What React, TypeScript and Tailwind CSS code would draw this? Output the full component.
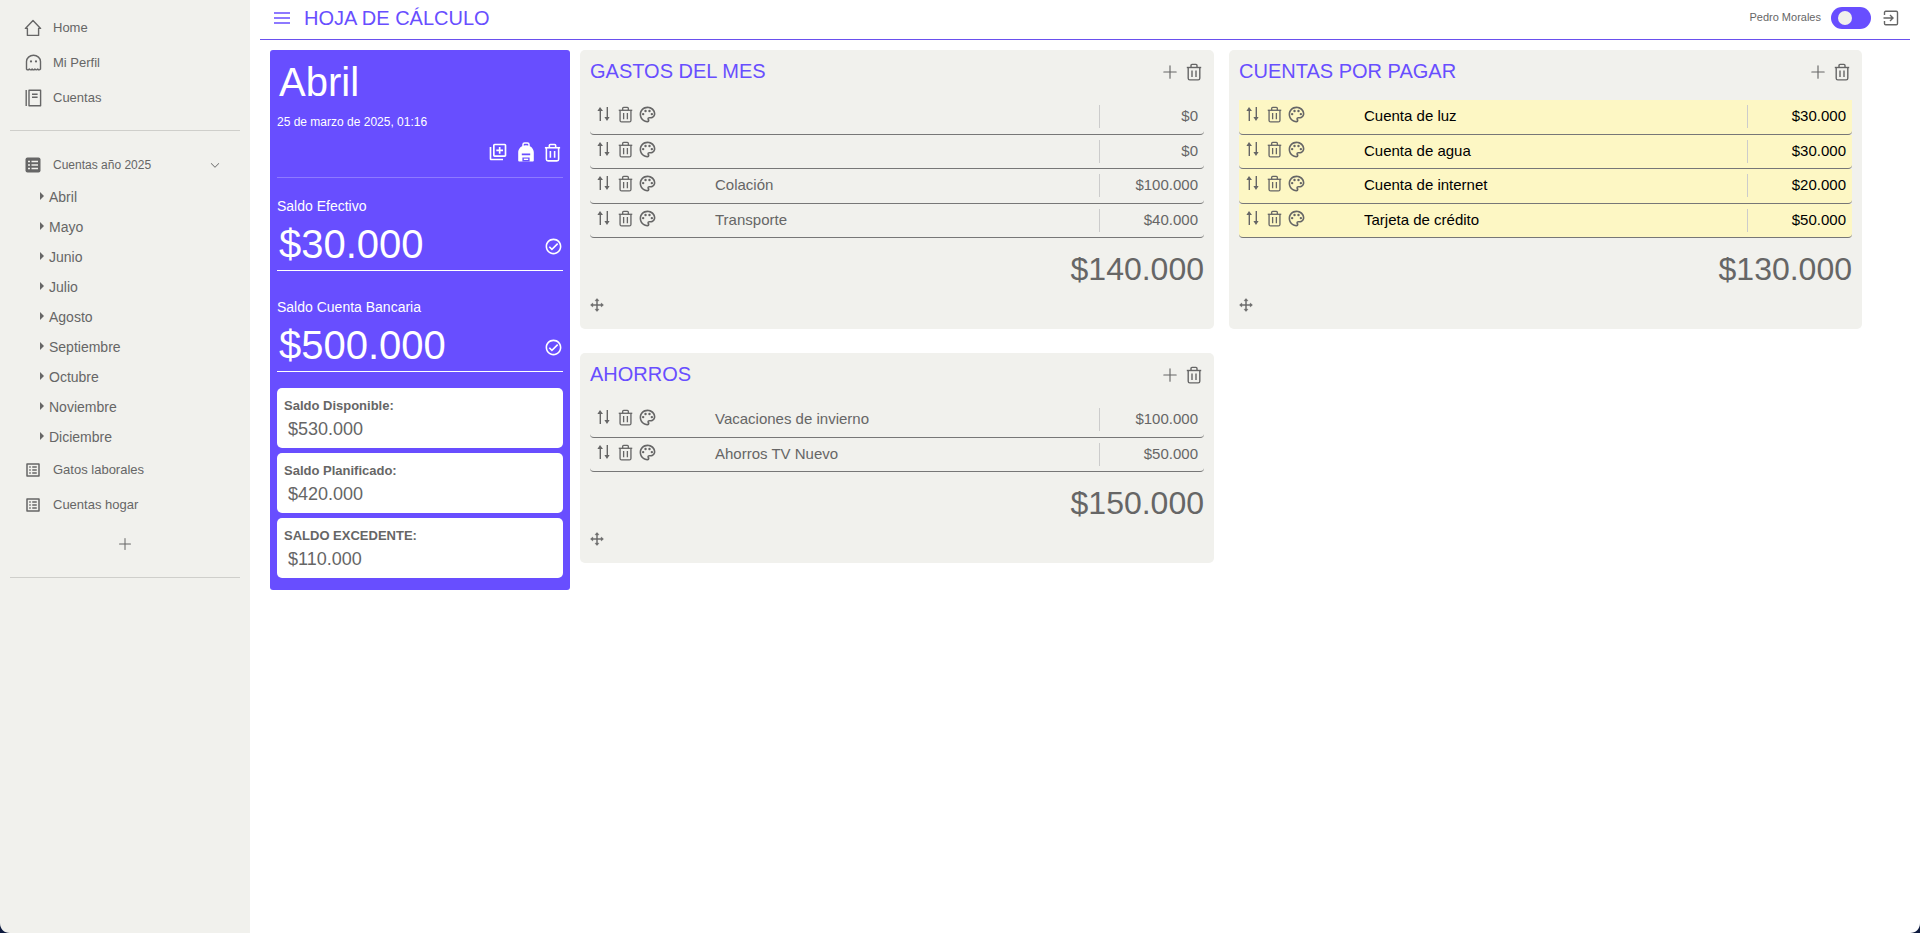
import React from "react";
import { PiPlus, PiCaretDown } from "react-icons/pi";
import { MdOutlineLibraryAdd, MdOutlineCheckCircle, MdOutlineListAlt, MdOutlinePalette } from "react-icons/md";

const FONT = "font-['Liberation_Sans',Arial,sans-serif]";

function Trash({ w = 15, h = 17, color = "#666", sw = 1.4 }: { w?: number; h?: number; color?: string; sw?: number }) {
  return (
    <svg width={w} height={h} viewBox="0 0 16 18" fill="none" stroke={color} strokeWidth={sw}>
      <path d="M0.8 4.5h14.4" />
      <path d="M5 4.5V2.4a1 1 0 0 1 1-1h4a1 1 0 0 1 1 1v2.1" />
      <path d="M2.2 4.5v10.8a1.6 1.6 0 0 0 1.6 1.6h8.4a1.6 1.6 0 0 0 1.6-1.6V4.5" />
      <path d="M6 7.5v6.5M10 7.5v6.5" />
    </svg>
  );
}

function SortIcon() {
  return (
    <svg width="13" height="16" viewBox="0 0 13 16" fill="#666" stroke="none">
      <path d="M3 1L6 5H4V15H2.6V5H0.4Z" />
      <path d="M9.6 1H11V11H12.6L10 15L7.4 11H9.6Z" />
    </svg>
  );
}

function MoveIcon() {
  return (
    <svg width="14" height="14" viewBox="0 0 14 14" fill="#666" stroke="#666" strokeWidth="0.4">
      <path d="M7 0.5L9 2.8H5ZM7 13.5L5 11.2H9ZM0.5 7L2.8 5V9ZM13.5 7L11.2 9V5Z" />
      <path d="M6.5 2.5h1v9h-1zM2.5 6.5h9v1h-9z" />
    </svg>
  );
}

function HomeIcon() {
  return (
    <svg width="18" height="18" viewBox="0 0 18 18" fill="none" stroke="#666" strokeWidth="1.4" strokeLinejoin="round">
      <path d="M9 1.6L1.4 9.4H3.4V16.4H14.6V9.4H16.6Z" />
    </svg>
  );
}

function GhostIcon() {
  return (
    <svg width="17" height="17" viewBox="0 0 17 17" fill="none" stroke="#666" strokeWidth="1.4" strokeLinejoin="round">
      <path d="M1.5 15V7.5a7 6.2 0 0 1 14 0V15c-1 1.2-1.9 1.2-2.8 0-1 1.2-1.8 1.2-2.8 0-.9 1.2-1.9 1.2-2.8 0-.9 1.2-1.8 1.2-2.8 0-.9 1.2-1.9 1.2-2.8 0Z" />
      <circle cx="6" cy="7.4" r="1.1" fill="#666" stroke="none" />
      <circle cx="11" cy="7.4" r="1.1" fill="#666" stroke="none" />
    </svg>
  );
}

function NotebookIcon() {
  return (
    <svg width="17" height="18" viewBox="0 0 17 18" fill="none" stroke="#666" strokeWidth="1.4">
      <path d="M1.2 1v16" />
      <path d="M4 1.2h11.6v15.6H4Z" strokeLinejoin="round" />
      <path d="M7 5.2h5.6M7 8.2h5.6" />
    </svg>
  );
}

function FilledList() {
  return (
    <svg width="18" height="18" viewBox="0 0 18 18" fill="none">
      <rect x="1.5" y="1.5" width="15" height="15" rx="2" fill="#666" />
      <path d="M4 5.5h2M7.5 5.5h6.5M4 9h2M7.5 9h6.5M4 12.5h2M7.5 12.5h6.5" stroke="#f1f1ed" strokeWidth="1.4" />
    </svg>
  );
}

function Backpack() {
  return (
    <svg width="18" height="20" viewBox="0 0 18 20" fill="none">
      <path d="M6 4V2.6A1.6 1.6 0 0 1 7.6 1h2.8A1.6 1.6 0 0 1 12 2.6V4" stroke="#fff" strokeWidth="1.5" />
      <path d="M1.2 18.5V10.5C1.2 6.3 4.6 3.2 9 3.2s7.8 3.1 7.8 7.3v8a.9.9 0 0 1-.9.9H2.1a.9.9 0 0 1-.9-.9Z" fill="#fff" />
      <path d="M4.8 11.4h8.4v1.8H4.8Z M5.4 15.4h7.2v4H5.4Z" fill="#684eff" />
      <path d="M6.8 16.6h4.4v1.4H6.8Z" fill="#fff" />
    </svg>
  );
}

function HamburgerIcon() {
  return (
    <svg width="16" height="12" viewBox="0 0 16 12" fill="none" stroke="#684eff" strokeWidth="1.5">
      <path d="M0 1h16M0 6h16M0 11h16" />
    </svg>
  );
}

function LogoutIcon() {
  return (
    <svg width="18" height="18" viewBox="0 0 18 18" fill="none" stroke="#666" strokeWidth="1.4">
      <path d="M2.5 6V3.5a1.2 1.2 0 0 1 1.2-1.2h10.6a1.2 1.2 0 0 1 1.2 1.2v11a1.2 1.2 0 0 1-1.2 1.2H3.7a1.2 1.2 0 0 1-1.2-1.2V12" />
      <path d="M1.5 9h9M8 6l3 3-3 3" />
    </svg>
  );
}

function NavItem({ icon, label, textClass = "text-[13px]" }: { icon: React.ReactNode; label: string; textClass?: string }) {
  return (
    <div className="flex items-center h-[35px] pl-[23px] text-[#666]">
      <span className="w-[20px] flex justify-center">{icon}</span>
      <span className={`ml-[10px] ${textClass}`}>{label}</span>
    </div>
  );
}

const MONTHS = ["Abril", "Mayo", "Junio", "Julio", "Agosto", "Septiembre", "Octubre", "Noviembre", "Diciembre"];

function Sidebar() {
  return (
    <aside className="w-[250px] shrink-0 h-[933px] bg-[#f1f1ed] pt-[10px]">
      <NavItem icon={<HomeIcon />} label="Home" />
      <NavItem icon={<GhostIcon />} label="Mi Perfil" />
      <NavItem icon={<NotebookIcon />} label="Cuentas" />
      <div className="mx-[10px] mt-[15px] border-t border-[#cfcfcb]" />
      <div className="mt-[16px] flex items-center h-[35px] pl-[23px] pr-[29px] text-[#666]">
        <span className="w-[20px] flex justify-center"><FilledList /></span>
        <span className="ml-[10px] text-[12px] flex-1">Cuentas año 2025</span>
        <PiCaretDown size={12} color="#666" weight="bold" />
      </div>
      <div>
        {MONTHS.map((m) => (
          <div key={m} className="h-[30px] flex items-center pl-[40px] text-[14px] text-[#666]">
            <span className="w-0 h-0 border-y-[4px] border-y-transparent border-l-[4px] border-l-[#666] mr-[5px] -mt-[2px]" />
            <span>{m}</span>
          </div>
        ))}
      </div>
      <NavItem icon={<MdOutlineListAlt size={18} color="#666" />} label="Gatos laborales" />
      <NavItem icon={<MdOutlineListAlt size={18} color="#666" />} label="Cuentas hogar" />
      <div className="flex justify-center mt-[6px] h-[32px] items-center"><PiPlus size={16} color="#666" /></div>
      <div className="mx-[10px] mt-[17px] border-t border-[#cfcfcb]" />
    </aside>
  );
}

function Header() {
  return (
    <header className="h-[40px] border-b border-[#6a50ee] flex items-center pb-[4px] pl-[14px] pr-[10px]">
      <HamburgerIcon />
      <h1 className="ml-[14px] text-[20px] text-[#684eff] font-normal">HOJA DE CÁLCULO</h1>
      <div className="ml-auto flex items-center">
        <span className="text-[11px] text-[#666]">Pedro Morales</span>
        <div className="ml-[10px] w-[40px] h-[22px] rounded-full bg-[#684eff] flex items-center pl-[7px]">
          <div className="w-[14px] h-[14px] rounded-full bg-[#f1f1ed]" />
        </div>
        <span className="ml-[11px]"><LogoutIcon /></span>
      </div>
    </header>
  );
}

function Balance({ label, value }: { label: string; value: string }) {
  return (
    <div className="h-[82px] border-b border-white">
      <div className="text-[14px] text-white leading-[16px] pt-[9px] h-[33px]">{label}</div>
      <div className="flex items-center justify-between -mt-[1px]">
        <span className="text-[40px] leading-[46px] text-white pl-[2px]">{value}</span>
        <MdOutlineCheckCircle size={19} color="#fff" className="mt-[5px]" />
      </div>
    </div>
  );
}

function Mini({ label, value }: { label: string; value: string }) {
  return (
    <div className="h-[60px] bg-white rounded-[5px] pl-[7px] pt-[10px] text-[#666]">
      <div className="text-[13px] font-bold leading-[16px]">{label}</div>
      <div className="text-[18px] leading-[22px] pl-[4px] mt-[4px]">{value}</div>
    </div>
  );
}

function MonthCard() {
  return (
    <section className="w-[300px] shrink-0 h-[540px] bg-[#684eff] rounded-[3px] px-[7px]">
      <div className="text-[40px] leading-[46px] text-white pl-[2px] pt-[9px]">Abril</div>
      <div className="text-[12px] leading-[14px] text-white mt-[10px]">25 de marzo de 2025, 01:16</div>
      <div className="flex justify-end items-center gap-[9px] mt-[12px] h-[22px] pr-[2px]">
        <MdOutlineLibraryAdd size={20} color="#fff" />
        <Backpack />
        <Trash w={17} h={19} color="#fff" sw={1.5} />
      </div>
      <div className="border-t border-white/25 mt-[14px]" />
      <div className="mt-[11px]"><Balance label="Saldo Efectivo" value="$30.000" /></div>
      <div className="mt-[19px]"><Balance label="Saldo Cuenta Bancaria" value="$500.000" /></div>
      <div className="mt-[16px] flex flex-col gap-[5px]">
        <Mini label="Saldo Disponible:" value="$530.000" />
        <Mini label="Saldo Planificado:" value="$420.000" />
        <Mini label="SALDO EXCEDENTE:" value="$110.000" />
      </div>
    </section>
  );
}

type Row = { label: string; value: string };

function RowItem({ row, yellow, index }: { row: Row; yellow?: boolean; index: number }) {
  return (
    <div className={`${index % 2 === 0 ? "h-[35px]" : "h-[34px]"} flex border-b border-[#777] rounded-b-[4px] ${yellow ? "bg-[#fdf7c4]" : ""}`}>
      <div className="w-[125px] shrink-0 flex items-start pl-[7px] pt-[6px]">
        <SortIcon />
        <span className="ml-[8px]"><Trash w={15} h={17} /></span>
        <span className="ml-[5px] -mt-[1px]"><MdOutlinePalette size={19} color="#666" /></span>
      </div>
      <div className={`flex-1 text-[15px] pt-[7px] leading-[18px] ${yellow ? "text-black" : "text-[#666]"}`}>{row.label}</div>
      <div className={`w-[105px] shrink-0 h-[23px] mt-[5px] border-l border-[#ccc] text-right pr-[6px] pt-[2px] text-[15px] leading-[18px] ${yellow ? "text-black" : "text-[#666]"}`}>{row.value}</div>
    </div>
  );
}

function SheetCard({ title, rows, total, yellow, className = "" }: { title: string; rows: Row[]; total: string; yellow?: boolean; className?: string }) {
  return (
    <section className={`bg-[#f1f1ed] rounded-[5px] px-[10px] pt-[10px] pb-[14px] ${className}`}>
      <div className="h-[40px] flex items-start">
        <h2 className="text-[20px] leading-[23px] text-[#684eff] font-normal flex-1">{title}</h2>
        <div className="flex items-center gap-[7px] mt-[2px] h-[20px] pr-[2px]">
          <PiPlus size={18} color="#666" />
          <Trash w={16} h={18} />
        </div>
      </div>
      {rows.map((r, i) => <RowItem key={i} index={i} row={r} yellow={yellow} />)}
      <div className="text-right text-[32px] leading-[36px] text-[#666] mt-[13px]">{total}</div>
      <div className="mt-[8px] h-[20px] flex items-center"><MoveIcon /></div>
    </section>
  );
}

function ScreenCorner({ className, d }: { className: string; d: string }) {
  return (
    <svg width="10" height="10" viewBox="0 0 10 10" className={`absolute bottom-0 ${className}`}>
      <path d={d} fill="#0d1a3e" />
    </svg>
  );
}

export default function App() {
  return (
    <div className={`relative flex h-[933px] overflow-hidden bg-white ${FONT}`}>
      <Sidebar />
      <main className="flex-1 pl-[10px] pr-[10px]">
        <Header />
        <div className="flex items-start pt-[10px] pl-[10px]">
          <MonthCard />
          <div className="w-[634px] ml-[10px] flex flex-col gap-[24px]">
            <SheetCard title="GASTOS DEL MES" total="$140.000" rows={[
              { label: "", value: "$0" },
              { label: "", value: "$0" },
              { label: "Colación", value: "$100.000" },
              { label: "Transporte", value: "$40.000" },
            ]} />
            <SheetCard title="AHORROS" total="$150.000" rows={[
              { label: "Vacaciones de invierno", value: "$100.000" },
              { label: "Ahorros TV Nuevo", value: "$50.000" },
            ]} />
          </div>
          <SheetCard className="w-[633px] ml-[15px]" yellow title="CUENTAS POR PAGAR" total="$130.000" rows={[
            { label: "Cuenta de luz", value: "$30.000" },
            { label: "Cuenta de agua", value: "$30.000" },
            { label: "Cuenta de internet", value: "$20.000" },
            { label: "Tarjeta de crédito", value: "$50.000" },
          ]} />
        </div>
      </main>
      <ScreenCorner className="left-0" d="M0 0C0 6 4 10 10 10H0Z" />
      <ScreenCorner className="right-0" d="M10 0C10 6 6 10 0 10H10Z" />
    </div>
  );
}
